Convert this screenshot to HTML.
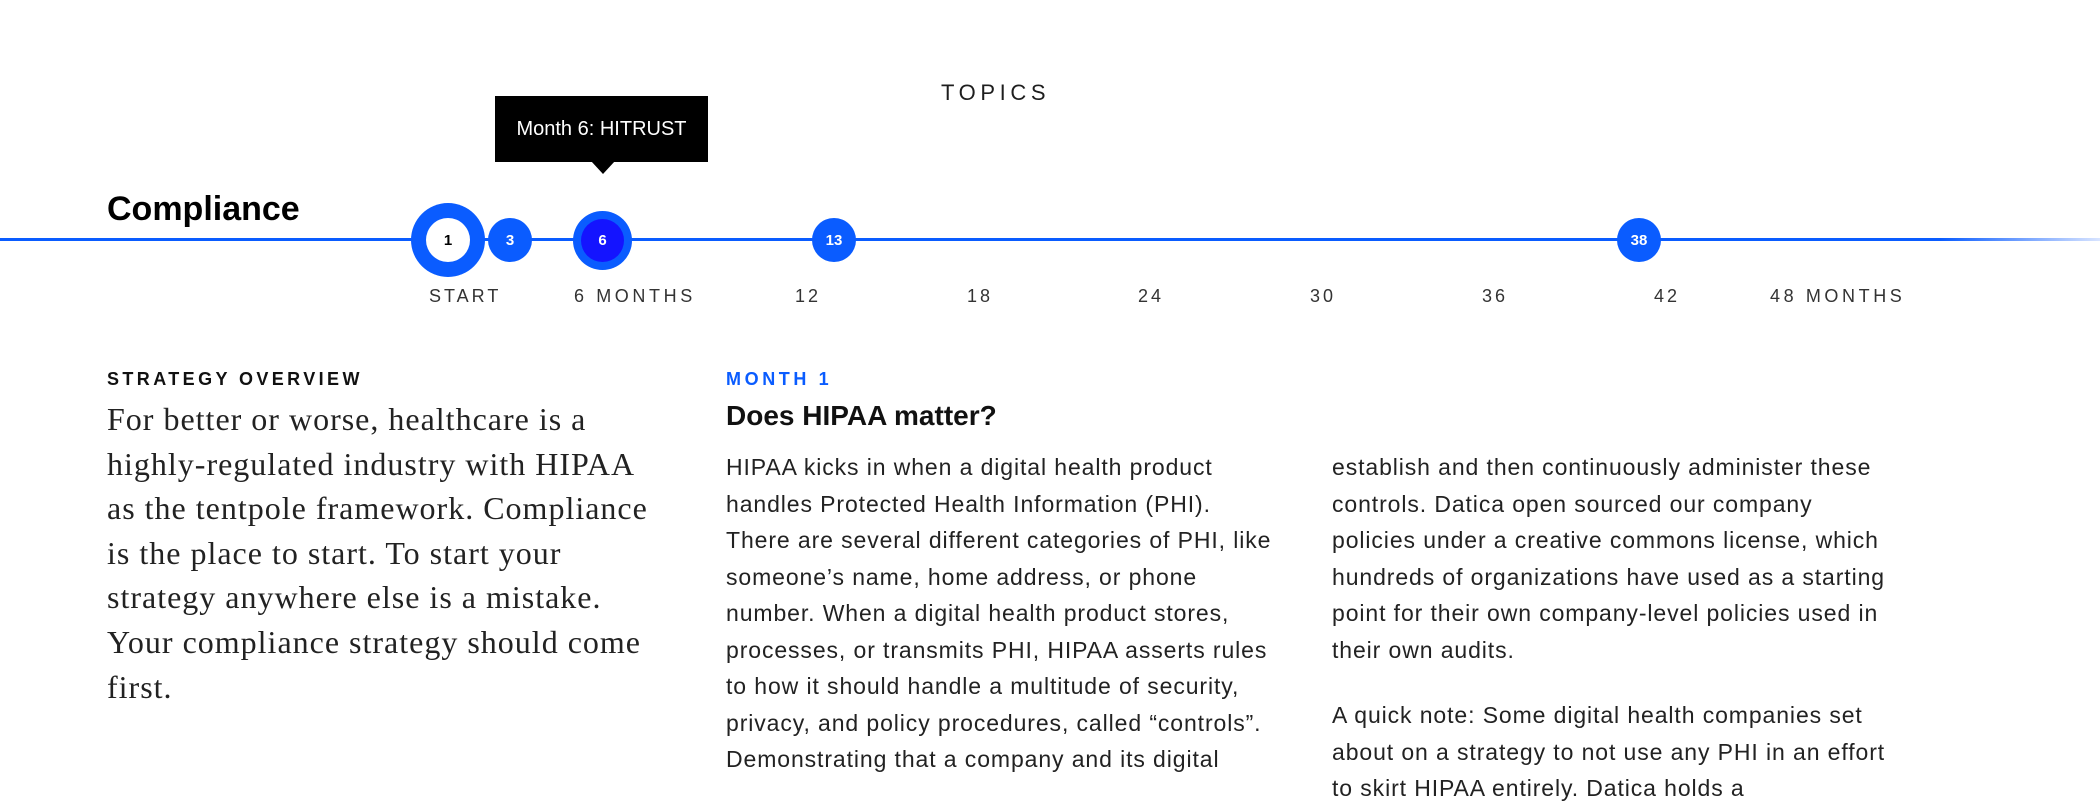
<!DOCTYPE html>
<html><head><meta charset="utf-8"><style>
*{margin:0;padding:0;box-sizing:border-box}
body{width:2100px;height:790px;background:#fff;position:relative;overflow:hidden;font-family:"Liberation Sans",sans-serif;color:#1e1e1e}
.a{position:absolute;white-space:nowrap}
.line{position:absolute;left:0;top:238px;width:2100px;height:3px;background:linear-gradient(to right,#0a5cff 0,#0a5cff 1940px,#d8e4ff 2100px)}
.c{position:absolute;border-radius:50%;background:#0a5cff;color:#fff;font-weight:bold;font-size:15px;display:flex;align-items:center;justify-content:center}
.lbl{position:absolute;top:286px;font-size:18px;letter-spacing:3px;color:#333;white-space:nowrap}
.serif{font-family:"Liberation Serif",serif;font-size:32px;letter-spacing:1px;line-height:44.6px;color:#222}
.body{font-size:23px;letter-spacing:0.9px;line-height:36.5px;color:#222}
</style></head><body>
<div class="a" style="left:941px;top:80px;font-size:22px;letter-spacing:4.6px">TOPICS</div>
<div class="a" style="left:495px;top:96px;width:213px;height:66px;background:#000;color:#fff;font-size:20px;display:flex;align-items:center;justify-content:center">Month 6: HITRUST</div>
<div class="a" style="left:591px;top:161px;width:0;height:0;border-left:12px solid transparent;border-right:12px solid transparent;border-top:13px solid #000"></div>
<div class="a" style="left:107px;top:190px;font-size:34px;font-weight:bold;color:#000">Compliance</div>
<div class="line"></div>
<div class="c" style="left:411px;top:203px;width:74px;height:74px"><div style="width:44px;height:44px;border-radius:50%;background:#fff;color:#000;display:flex;align-items:center;justify-content:center">1</div></div>
<div class="c" style="left:488px;top:218px;width:44px;height:44px">3</div>
<div class="c" style="left:573px;top:211px;width:59px;height:59px"><div style="width:43px;height:43px;border-radius:50%;background:#1414ff;display:flex;align-items:center;justify-content:center">6</div></div>
<div class="c" style="left:812px;top:218px;width:44px;height:44px">13</div>
<div class="c" style="left:1617px;top:218px;width:44px;height:44px">38</div>
<div class="lbl" style="left:429px">START</div>
<div class="lbl" style="left:574px;letter-spacing:3.6px">6 MONTHS</div>
<div class="lbl" style="left:795px">12</div>
<div class="lbl" style="left:967px">18</div>
<div class="lbl" style="left:1138px">24</div>
<div class="lbl" style="left:1310px">30</div>
<div class="lbl" style="left:1482px">36</div>
<div class="lbl" style="left:1654px">42</div>
<div class="lbl" style="left:1770px;letter-spacing:3.6px">48 MONTHS</div>
<div class="a" style="left:107px;top:369px;font-size:18px;font-weight:bold;letter-spacing:3.4px;color:#111">STRATEGY OVERVIEW</div>
<div class="a serif" style="left:107px;top:397px">For better or worse, healthcare is a<br>highly-regulated industry with HIPAA<br>as the tentpole framework. Compliance<br>is the place to start. To start your<br>strategy anywhere else is a mistake.<br>Your compliance strategy should come<br>first.</div>
<div class="a" style="left:726px;top:369px;font-size:18px;font-weight:bold;letter-spacing:3.6px;color:#0a5cff">MONTH 1</div>
<div class="a" style="left:726px;top:400px;font-size:28px;font-weight:bold;color:#111">Does HIPAA matter?</div>
<div class="a body" style="left:726px;top:449px">HIPAA kicks in when a digital health product<br>handles Protected Health Information (PHI).<br>There are several different categories of PHI, like<br>someone’s name, home address, or phone<br>number. When a digital health product stores,<br>processes, or transmits PHI, HIPAA asserts rules<br>to how it should handle a multitude of security,<br>privacy, and policy procedures, called “controls”.<br>Demonstrating that a company and its digital</div>
<div class="a body" style="left:1332px;top:449px">establish and then continuously administer these<br>controls. Datica open sourced our company<br>policies under a creative commons license, which<br>hundreds of organizations have used as a starting<br>point for their own company-level policies used in<br>their own audits.</div>
<div class="a body" style="left:1332px;top:697px">A quick note: Some digital health companies set<br>about on a strategy to not use any PHI in an effort<br>to skirt HIPAA entirely. Datica holds a</div>
</body></html>
